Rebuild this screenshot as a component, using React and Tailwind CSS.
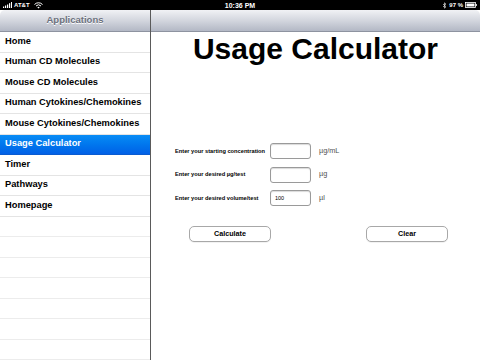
import React, { useState } from 'react';

const items = [
  'Home',
  'Human CD Molecules',
  'Mouse CD Molecules',
  'Human Cytokines/Chemokines',
  'Mouse Cytokines/Chemokines',
  'Usage Calculator',
  'Timer',
  'Pathways',
  'Homepage',
];

const fields = [
  { label: 'Enter your starting concentration', unit: 'µg/mL', value: '' },
  { label: 'Enter your desired µg/test', unit: 'µg', value: '' },
  { label: 'Enter your desired volume/test', unit: 'µl', value: '100' },
];

const StatusBar = () => (
  <div className="h-[10px] bg-black text-white flex items-center justify-between px-[3px] text-[7px] font-bold leading-none relative">
    <div className="flex items-center gap-[2px]">
      <svg width="9" height="6" viewBox="0 0 9 6">
        <rect x="0" y="4.5" width="1.2" height="1.5" fill="#fff" />
        <rect x="2" y="3.5" width="1.2" height="2.5" fill="#fff" />
        <rect x="4" y="2.5" width="1.2" height="3.5" fill="#fff" />
        <rect x="6" y="1.2" width="1.2" height="4.8" fill="#fff" />
        <rect x="8" y="0" width="1" height="6" fill="#fff" />
      </svg>
      <span className="text-[6px]">AT&amp;T</span>
      <svg width="9" height="7" viewBox="0 0 9 7" className="ml-[2px]">
        <path d="M0.5 2.5 A5.5 5.5 0 0 1 8.5 2.5" stroke="#fff" strokeWidth="1" fill="none" />
        <path d="M2 4 A3.5 3.5 0 0 1 7 4" stroke="#fff" strokeWidth="1" fill="none" />
        <path d="M4.5 6.5 L3.3 5.2 A1.8 1.8 0 0 1 5.7 5.2 Z" fill="#fff" />
      </svg>
    </div>
    <span className="absolute left-1/2 -translate-x-1/2">10:36 PM</span>
    <div className="flex items-center gap-[2px]">
      <svg width="5" height="7" viewBox="0 0 5 7">
        <path d="M1 2 L4 4.8 L2.5 6.2 L2.5 0.8 L4 2.2 L1 5" stroke="#ddd" strokeWidth="0.7" fill="none" />
      </svg>
      <span className="text-[6px]">97 %</span>
      <svg width="12" height="6" viewBox="0 0 12 6">
        <rect x="0.5" y="0.5" width="10" height="5" fill="none" stroke="#fff" strokeWidth="0.8" />
        <rect x="1.5" y="1.5" width="8" height="3" fill="#fff" />
        <rect x="10.8" y="2" width="1" height="2" fill="#fff" />
      </svg>
    </div>
  </div>
);

const Sidebar = () => (
  <div className="w-[151px] shrink-0 flex flex-col border-r border-[#5a5a5a] bg-white">
    <div className="h-[22px] shrink-0 rounded-tl-[5px] bg-gradient-to-b from-[#f1f2f5] via-[#d3d6de] to-[#b3b8c5] border-b border-[#8e93a0] flex items-center justify-center">
      <span className="text-[9.5px] font-bold text-[#6c717d] [text-shadow:0_1px_0_#fff]">Applications</span>
    </div>
    <div className="flex-1 overflow-hidden">
      {items.map((item) => {
        const active = item === 'Usage Calculator';
        return (
          <div
            key={item}
            className={
              active
                ? 'h-[20.5px] flex items-center pl-[5px] text-[9.3px] font-bold text-white bg-gradient-to-b from-[#0a8cf5] to-[#0260e6] border-b border-[#0a5bd0]'
                : 'h-[20.5px] flex items-center pl-[5px] text-[9.3px] font-bold text-black border-b border-[#e4e4e4]'
            }
          >
            {item}
          </div>
        );
      })}
      {Array.from({ length: 7 }).map((_, i) => (
        <div key={i} className="h-[20.5px] border-b border-[#ececec]" />
      ))}
    </div>
  </div>
);

const App = () => {
  const [values, setValues] = useState(fields.map((f) => f.value));

  return (
    <div className="w-[480px] h-[360px] flex flex-col bg-black overflow-hidden font-['Liberation_Sans',Arial,sans-serif]">
      <StatusBar />
      <div className="flex-1 flex min-h-0">
        <Sidebar />
        <div className="flex-1 flex flex-col bg-white">
          <div className="h-[22px] shrink-0 rounded-tr-[5px] bg-gradient-to-b from-[#f1f2f5] via-[#d3d6de] to-[#b3b8c5] border-b border-[#8e93a0]" />

          {/* Title */}
          <h1 className="mt-[2px] text-center text-[30px] leading-[30px] font-bold text-black">Usage Calculator</h1>

          {/* Inputs */}
          <div className="mt-[79px] pl-[24px] flex flex-col gap-[7.5px]">
            {fields.map((f, i) => (
              <div key={f.label} className="flex items-center h-[16px]">
                <span className="w-[95px] text-[5.7px] font-bold text-black whitespace-nowrap">{f.label}</span>
                <input
                  value={values[i]}
                  onChange={(e) => {
                    const next = [...values];
                    next[i] = e.target.value;
                    setValues(next);
                  }}
                  className="w-[41px] h-[16px] rounded-[3px] border border-[#9a9a9a] bg-white px-[4px] text-[5.5px] text-black outline-none shadow-[inset_0_1px_1px_rgba(0,0,0,0.15)]"
                />
                <span className="ml-[8px] text-[7.3px] text-[#505050]">{f.unit}</span>
              </div>
            ))}
          </div>

          {/* Buttons */}
          <div className="mt-[20px] flex pl-[38px] gap-[95px]">
            <button className="w-[82px] h-[16px] rounded-[5px] border border-[#a8a8a8] bg-white text-[7.2px] font-bold text-black leading-none shadow-[0_1px_0_rgba(0,0,0,0.05)]">
              Calculate
            </button>
            <button className="w-[82px] h-[16px] rounded-[5px] border border-[#a8a8a8] bg-white text-[7.2px] font-bold text-black leading-none shadow-[0_1px_0_rgba(0,0,0,0.05)]">
              Clear
            </button>
          </div>
        </div>
      </div>
    </div>
  );
};

export default App;
